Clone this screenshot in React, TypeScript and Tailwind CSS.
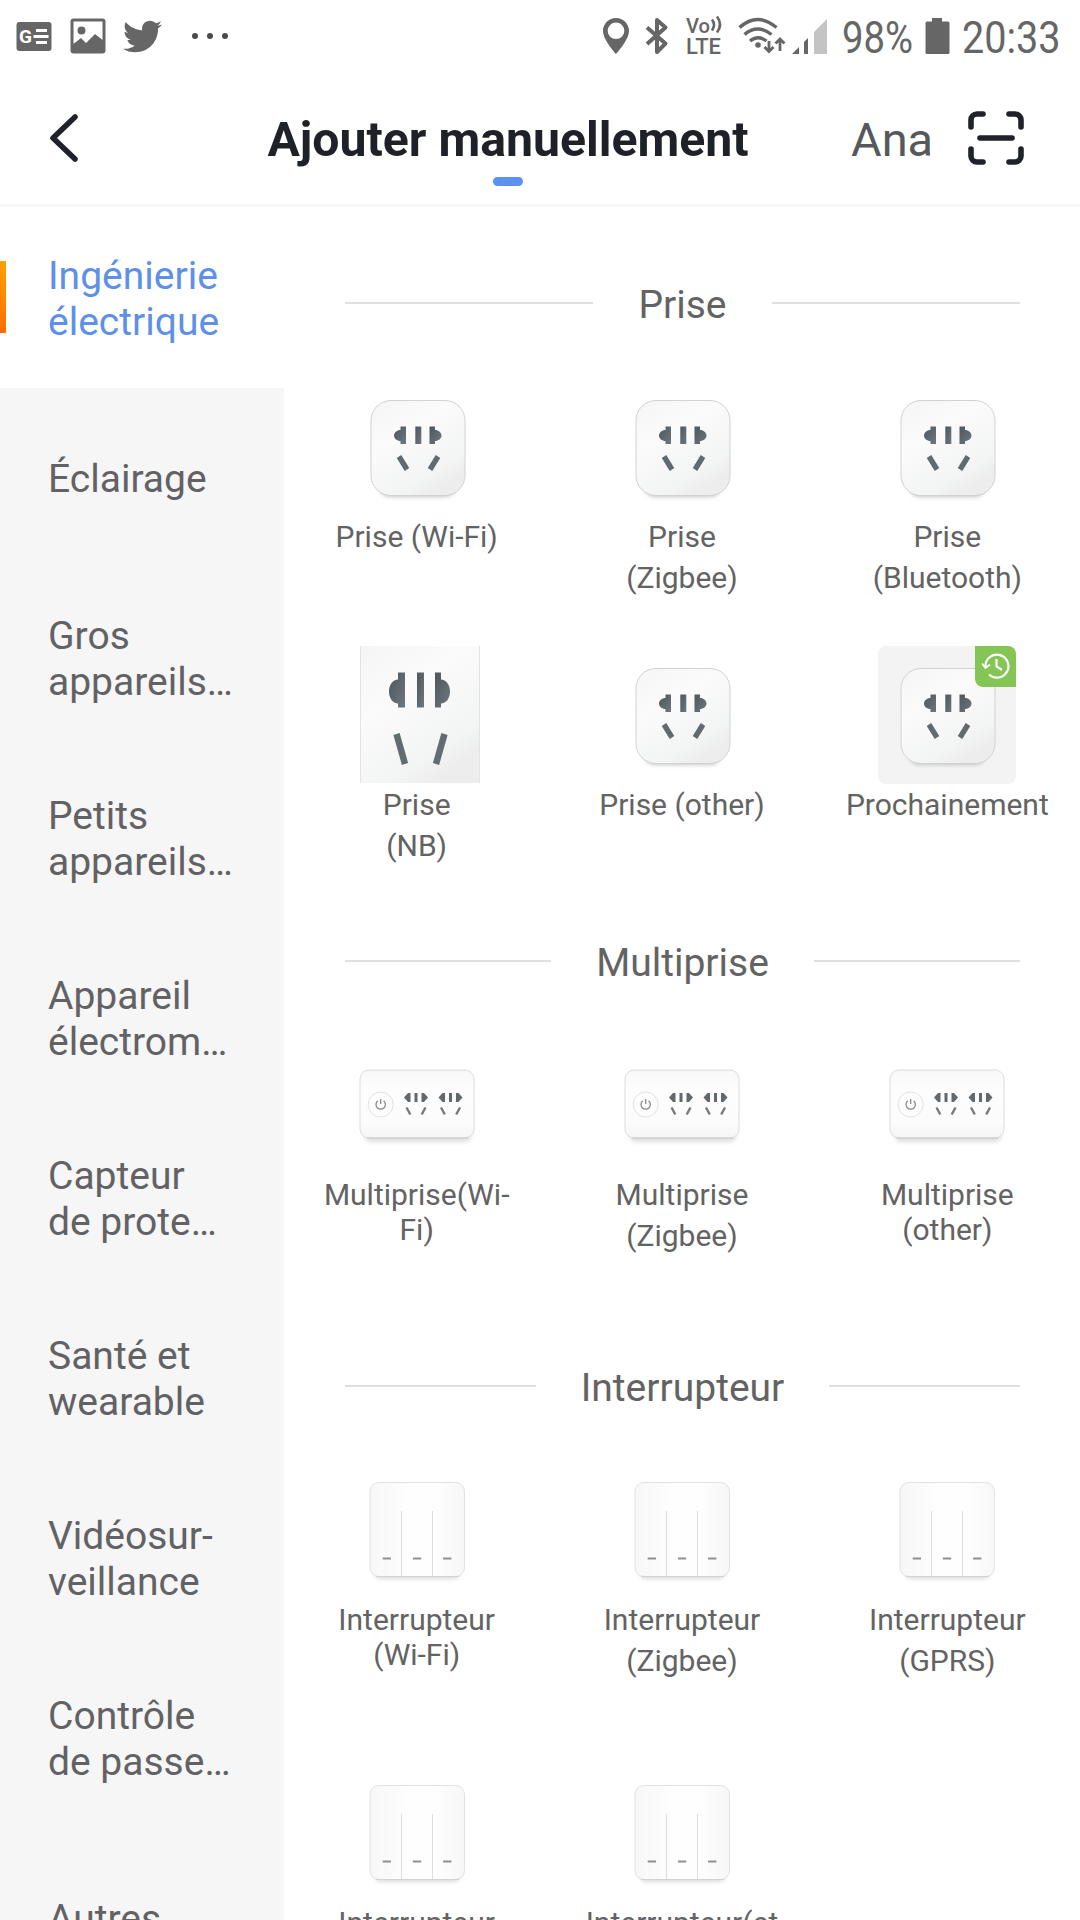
import { FaTwitter } from "react-icons/fa";

type DeviceKind = "socket" | "socket-nb" | "socket-soon" | "strip" | "switch";

interface Device {
  kind: DeviceKind;
  label: string;
  // protocol shown in its own block under the label
  suffix?: string;
}

interface Section {
  title: string;
  rowClass: string;
  devices: Device[];
}

const categories: string[][] = [
  ["Ingénierie", "électrique"],
  ["Éclairage"],
  ["Gros", "appareils…"],
  ["Petits", "appareils…"],
  ["Appareil", "électrom…"],
  ["Capteur", "de prote…"],
  ["Santé et", "wearable"],
  ["Vidéosur-", "veillance"],
  ["Contrôle", "de passe…"],
  ["Autres"],
];

const sections: Section[] = [
  {
    title: "Prise",
    rowClass: "auto-rows-[268px]",
    devices: [
      { kind: "socket", label: "Prise (Wi-Fi)" },
      { kind: "socket", label: "Prise", suffix: "(Zigbee)" },
      { kind: "socket", label: "Prise", suffix: "(Bluetooth)" },
      { kind: "socket-nb", label: "Prise", suffix: "(NB)" },
      { kind: "socket", label: "Prise (other)" },
      { kind: "socket-soon", label: "Prochainement" },
    ],
  },
  {
    title: "Multiprise",
    rowClass: "auto-rows-[303px]",
    devices: [
      { kind: "strip", label: "Multiprise(Wi-\nFi)" },
      { kind: "strip", label: "Multiprise", suffix: "(Zigbee)" },
      { kind: "strip", label: "Multiprise\n(other)" },
    ],
  },
  {
    title: "Interrupteur",
    rowClass: "auto-rows-[303px]",
    devices: [
      { kind: "switch", label: "Interrupteur\n(Wi-Fi)" },
      { kind: "switch", label: "Interrupteur", suffix: "(Zigbee)" },
      { kind: "switch", label: "Interrupteur", suffix: "(GPRS)" },
      { kind: "switch", label: "Interrupteur" },
      { kind: "switch", label: "Interrupteur(et" },
    ],
  },
];

const Gradients = () => (
  <svg width="0" height="0" className="absolute">
    <defs>
      <linearGradient id="body" x1="0" y1="0" x2="0.6" y2="1">
        <stop offset="0" stopColor="#f5f5f5" />
        <stop offset="0.4" stopColor="#fbfbfb" />
        <stop offset="0.85" stopColor="#f3f4f4" />
        <stop offset="1" stopColor="#ededee" />
      </linearGradient>
      <linearGradient id="slot" x1="0" y1="0" x2="1" y2="1">
        <stop offset="0" stopColor="#4f575c" />
        <stop offset="1" stopColor="#6d777e" />
      </linearGradient>
      <linearGradient id="panel" x1="0" y1="0" x2="1" y2="0">
        <stop offset="0" stopColor="#f7f7f7" />
        <stop offset="0.4" stopColor="#fefefe" />
        <stop offset="0.7" stopColor="#fefefe" />
        <stop offset="1" stopColor="#f7f7f7" />
      </linearGradient>
      <linearGradient id="stripBody" x1="0" y1="0" x2="0" y2="1">
        <stop offset="0" stopColor="#f8f8f8" />
        <stop offset="0.3" stopColor="#fdfdfd" />
        <stop offset="0.75" stopColor="#fcfcfc" />
        <stop offset="1" stopColor="#f5f5f5" />
      </linearGradient>
      <filter id="soft" x="-20%" y="-50%" width="140%" height="200%">
        <feGaussianBlur stdDeviation="2" />
      </filter>
    </defs>
  </svg>
);

const SocketIcon = () => (
  <svg width="138" height="138" viewBox="0 0 138 138">
    <rect x="32" y="100" width="75" height="18.500" rx="9" fill="#b9bdbd" filter="url(#soft)" />
    <rect x="23" y="22.500" width="94" height="95" rx="20" fill="url(#body)" stroke="#d2d2d2" />
    <g fill="url(#slot)">
      <path d="M58 48.500v17.500h-5.500v-3c-3.500 0-6.500-2.500-6.500-5.500s3-5.500 6.500-5.500v-3.500z" />
      <rect x="67.300" y="48.500" width="6" height="17.500" />
      <path d="M81.500 48.500v17.500h5.500v-3c3.500 0 6.500-2.500 6.500-5.500s-3-5.500-6.500-5.500v-3.500z" />
    </g>
    <g stroke="#616a6f" strokeWidth="5.300">
      <path d="M51 78.500l8 13" />
      <path d="M90 78.500l-8 13" />
    </g>
  </svg>
);

const NbSocketIcon = () => (
  <svg width="120" height="138" viewBox="0 0 120 138" className="relative left-[3px]">
    <rect width="120" height="137" fill="url(#body)" />
    <path d="M0.500 0v137M119.500 0v137" stroke="#e2e3e3" />
    <g fill="url(#slot)">
      <path d="M45 26.500v35h-7v-4c-5 0-9-5-9-12s4-12 9-12v-7z" />
      <rect x="57" y="26.500" width="7" height="35" />
      <path d="M75 26.500v35h6v-4c5 0 9-5 9-12s-4-12-9-12v-7z" />
    </g>
    <g stroke="#626d71" strokeWidth="6.500">
      <path d="M36.500 88l8.500 30" />
      <path d="M84.500 88l-8.500 30" />
    </g>
  </svg>
);

const MiniSlots = ({ x }: { x: number }) => (
  <g transform={`translate(${x} 57)`}>
    <g fill="#62686c">
      <path d="M6.500 0v9h-2.500l-4-4.500l4-4.500z" />
      <rect x="10.500" width="3" height="9" />
      <path d="M17.500 0v9h2.500l4-4.500l-4-4.500z" />
    </g>
    <path d="M2.500 14.500l3.800 7M21.500 14.500l-3.800 7" stroke="#777a7c" strokeWidth="2.400" />
  </g>
);

const StripIcon = () => (
  <svg width="138" height="138" viewBox="0 0 138 138">
    <rect x="17" y="92" width="106" height="14" rx="6" fill="#dedede" filter="url(#soft)" />
    <rect x="12" y="34" width="114" height="68" rx="9" fill="url(#stripBody)" stroke="#dcdcdc" />
    <path d="M19 102h101" stroke="#c8c8c8" />
    <circle cx="32.700" cy="68.500" r="12.500" fill="#fdfdfd" stroke="#e2e2e2" />
    <path d="M29.800 64.800a4.700 4.700 0 1 0 5.800 0M32.700 63v5" fill="none" stroke="#8a8a8a" strokeWidth="1.300" />
    <MiniSlots x={56} />
    <MiniSlots x={90.500} />
  </svg>
);

const SwitchIcon = () => (
  <svg width="138" height="138" viewBox="0 0 138 138">
    <rect x="27" y="104" width="85" height="14" rx="6" fill="#dcdcdc" filter="url(#soft)" />
    <rect x="22" y="21.500" width="94.500" height="94" rx="9" fill="url(#panel)" stroke="#e2e2e2" />
    <path d="M53.500 50v65M84.500 50v65" stroke="#dedede" />
    <path d="M28 115.500h83" stroke="#d2d2d2" />
    <path d="M34.700 97.500h8.300M64.900 97.500h8.300M95.100 97.500h8.300" stroke="#8f8f8f" strokeWidth="2.200" />
  </svg>
);

const SoonIcon = () => (
  <div className="relative h-[138px] w-[138px] overflow-hidden rounded-lg bg-[#f3f3f3]">
    <SocketIcon />
    <div className="absolute right-0 top-0 flex h-[41px] w-[41px] items-center justify-center rounded-bl-lg bg-[#85c556]">
      <svg width="28" height="28" viewBox="0 0 28 28" fill="none" stroke="#fff" strokeWidth="2.200">
        <path d="M3.500 14.500A11.500 11.500 0 1 1 7 21.500" />
        <path d="M0 10.500l3.500 4.500l4.500-3.500" strokeWidth="1.800" />
        <path d="M14.500 6v7.500l5.500 3.500" />
      </svg>
    </div>
  </div>
);

const icons: Record<DeviceKind, React.ReactNode> = {
  socket: <SocketIcon />,
  "socket-nb": <NbSocketIcon />,
  "socket-soon": <SoonIcon />,
  strip: <StripIcon />,
  switch: <SwitchIcon />,
};

const StatusBar = () => (
  <div className="flex h-[72px] items-center justify-between pl-4 pr-5 text-[#666666]">
    <div className="flex items-center">
      <svg width="36" height="30" viewBox="0 0 36 30">
        <rect x="0.500" y="1" width="35" height="29" rx="3" fill="#666666" />
        <text x="3" y="22" fontSize="19" fontWeight="700" fill="#fff" className="font-[Roboto,sans-serif]">
          G
        </text>
        <path d="M20 9.500h11M17.500 15.500h15M20 21.500h11" stroke="#fff" strokeWidth="2.800" />
      </svg>
      <svg width="36" height="36" viewBox="0 0 36 36" className="ml-[18px]">
        <rect x="2" y="2" width="32" height="32" rx="1.500" fill="none" stroke="#666666" strokeWidth="3" />
        <circle cx="11.500" cy="12.500" r="4" fill="#666666" />
        <path d="M2 27l9-7 5 5 9-9 9 7v11H2z" fill="#666666" />
      </svg>
      <FaTwitter className="ml-[17px] h-[39px] w-[39px]" />
      <div className="ml-[30px] flex gap-[9px]">
        <span className="h-[6px] w-[6px] rounded-full bg-[#4a4a4a]" />
        <span className="h-[6px] w-[6px] rounded-full bg-[#4a4a4a]" />
        <span className="h-[6px] w-[6px] rounded-full bg-[#4a4a4a]" />
      </div>
    </div>

    <div className="flex items-center">
      <svg width="26" height="36" viewBox="0 0 26 36">
        <path
          fillRule="evenodd"
          d="M13 0C5.800 0 0 5.700 0 13c0 9 13 23 13 23s13-14 13-23C26 5.700 20.200 0 13 0zm0 4.500a8.300 8.300 0 1 1 0 16.600a8.300 8.300 0 0 1 0-16.600z"
          fill="#666666"
        />
      </svg>
      <svg width="24" height="38" viewBox="0 0 24 38" className="ml-4">
        <path
          d="M2 10.500l18.500 16l-8.500 8.500V3l8.500 7.500L2 27"
          fill="none"
          stroke="#666666"
          strokeWidth="4"
          strokeLinejoin="round"
        />
      </svg>
      <svg width="37" height="42" viewBox="0 0 37 42" className="ml-[17px] overflow-visible">
        <g fill="#666666" className="font-[Roboto,sans-serif]" fontWeight="500">
          <text x="0" y="18" fontSize="21" textLength="24" lengthAdjust="spacingAndGlyphs">
            Vo
          </text>
          <text x="0" y="39" fontSize="22" textLength="35" lengthAdjust="spacingAndGlyphs">
            LTE
          </text>
        </g>
        <path d="M26 4.500q4 5 0 11M31 1.500q6 8 0 16" fill="none" stroke="#666666" strokeWidth="2.600" />
      </svg>
      <svg width="48" height="38" viewBox="0 0 48 38" className="ml-[15px]">
        <g fill="none" stroke="#666666" strokeWidth="3.400">
          <path d="M1.500 10.500q18-16 37 0" />
          <path d="M6.500 17.500q13-11 27 0" />
          <path d="M12 24q8-6.500 16.500 0" />
          <path d="M31 24v10.500M26.500 30l4.500 4.500l4.500-4.500M42 34v-11M37.500 26.500l4.500-4.500l4.500 4.500" strokeWidth="2.800" />
        </g>
        <circle cx="20" cy="28" r="2.800" fill="#666666" />
      </svg>
      <svg width="36" height="36" viewBox="0 0 36 36" className="ml-[6px]">
        <path d="M0 36l7-7v7zM12 24l4-4v16h-4z" fill="#666666" />
        <path d="M22 14L35 1v35H22z" fill="#c4c4c4" />
      </svg>
      <div className="ml-[14px] w-[72px] whitespace-nowrap text-[45px] leading-none">
        <span className="inline-block origin-left translate-y-[1px] scale-x-[0.850]">98%</span>
      </div>
      <svg width="25" height="36" viewBox="0 0 25 36" className="ml-[11px]">
        <path d="M7 0h10v3.500h6a1.500 1.500 0 0 1 1.500 1.500v29.500a1.500 1.500 0 0 1-1.500 1.500H2a1.500 1.500 0 0 1-1.500-1.500V5a1.500 1.500 0 0 1 1.500-1.500h5z" fill="#666666" />
      </svg>
      <div className="ml-[12px] w-[98px] whitespace-nowrap text-[45px] leading-none">
        <span className="inline-block origin-left translate-y-[1px] scale-x-[0.880]">20:33</span>
      </div>
    </div>
  </div>
);

const Header = () => (
  <header className="flex h-[135px] items-start border-b-[3px] border-[#f7f7f7] pt-[39px]">
    <svg width="34" height="54" viewBox="0 0 34 54" className="ml-[47px]">
      <path d="M28 6L6 27L28 48" fill="none" stroke="#20222a" strokeWidth="5.500" strokeLinecap="round" strokeLinejoin="round" />
    </svg>
    <div className="ml-[186px] flex w-[482px] flex-col items-center">
      <h1 className="mt-px whitespace-nowrap text-[48.200px] font-bold leading-[56px] text-[#1f2128]">Ajouter manuellement</h1>
      <span className="mt-[9px] h-[9px] w-[30px] rounded-full bg-[#5c90f1]" />
    </div>
    <div className="ml-[102px] mt-px w-[79px] overflow-hidden whitespace-nowrap text-[47px] leading-[56px] text-[#55595b]">
      Ana
    </div>
    <svg width="56" height="56" viewBox="0 0 56 56" className="ml-[38px]">
      <path
        d="M3 16V9a6 6 0 0 1 6-6h6M41 3h6a6 6 0 0 1 6 6v7M53 38v7a6 6 0 0 1-6 6h-6M15 51H9a6 6 0 0 1-6-6v-7M12 27h32"
        fill="none"
        stroke="#20222a"
        strokeWidth="5.600"
        strokeLinecap="round"
      />
    </svg>
  </header>
);

const Sidebar = () => (
  <nav className="w-[284px] shrink-0 bg-[#f6f6f7]">
    {categories.map((lines, index) => (
      <div
        key={lines[0]}
        className={
          index === 0
            ? "flex h-[181px] items-center bg-white text-[#5f90e8]"
            : "flex h-[180px] items-center text-[#626265]"
        }
      >
        {index === 0 && <span className="mb-[2px] h-[72px] w-[6px] bg-linear-to-b from-[#ffa100] to-[#ff6c00]" />}
        <div className={index === 0 ? "pl-[42px] pt-[2px]" : "pl-12 pt-[2px]"}>
          {lines.map((line) => (
            <p key={line} className="whitespace-nowrap text-[39px] leading-[46px]">
              {line}
            </p>
          ))}
        </div>
      </div>
    ))}
  </nav>
);

const DeviceCard = ({ device }: { device: Device }) => (
  <div className="flex flex-col items-center text-center">
    {icons[device.kind]}
    <p className="mt-[3px] whitespace-pre text-[30px] leading-[35px]">{device.label}</p>
    {device.suffix && <p className="mt-[6px] text-[30px] leading-[35px]">{device.suffix}</p>}
  </div>
);

export default function App() {
  return (
    <div className="flex h-[1920px] w-[1080px] flex-col overflow-hidden bg-white font-[Roboto,sans-serif]">
      <Gradients />
      <StatusBar />
      <Header />
      <div className="flex min-h-0 flex-1 overflow-hidden">
        <Sidebar />
        <main className="flex-1 pt-[49px] text-[#636363]">
          {sections.map((section) => (
            <section key={section.title}>
              <div className="mb-[29px] flex h-[93px] items-center pl-[61px] pr-[60px]">
                <span className="h-[2px] flex-1 bg-[#e0e0e0]" />
                <h2 className="px-[45px] pt-1 text-[39px] leading-[46px]">{section.title}</h2>
                <span className="h-[2px] flex-1 bg-[#e0e0e0]" />
              </div>
              <div className={`grid grid-cols-3 ${section.rowClass}`}>
                {section.devices.map((device, index) => (
                  <DeviceCard key={index} device={device} />
                ))}
              </div>
            </section>
          ))}
        </main>
      </div>
    </div>
  );
}
